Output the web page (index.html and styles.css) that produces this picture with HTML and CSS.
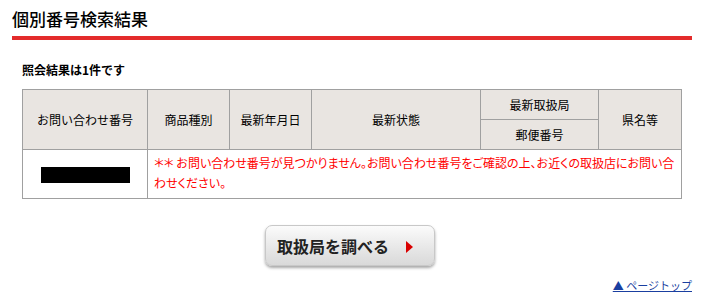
FILE: index.html
```html
<!DOCTYPE html>
<html>
<head>
  <meta charset="utf-8">
  <title>個別番号検索結果</title>
  <link rel="stylesheet" href="styles.css">
</head>
<body>
  <h1 class="titulo">個別番号検索結果</h1>

  <p class="resumo">照会結果は1件です</p>

  <table class="resultado">
    <tr>
      <th rowspan="2" class="c1">お問い合わせ番号</th>
      <th rowspan="2" class="c2">商品種別</th>
      <th rowspan="2" class="c3">最新年月日</th>
      <th rowspan="2" class="c4">最新状態</th>
      <th class="c5 meia">最新取扱局</th>
      <th rowspan="2" class="c6">県名等</th>
    </tr>
    <tr>
      <th class="meia">郵便番号</th>
    </tr>
    <tr>
      <td class="numero"><span class="tarja"></span></td>
      <td colspan="5" class="erro">＊＊ お問い合わせ番号が見つかりません。お問い合わせ番号をご確認の上、お近くの取扱店にお問い合わせください。</td>
    </tr>
  </table>

  <div class="meio_center">
    <button class="botao">取扱局を調べる<span class="seta"></span></button>
  </div>

  <div class="topo">
    <a href="#">▲ ページトップ</a>
  </div>
</body>
</html>
```

FILE: styles.css
```css
body {
  font-family: "Noto Sans CJK JP", "Liberation Sans", sans-serif;
  font-size: 12px;
  color: #000;
  background-color: #fff;
  margin: 0;
  padding: 0 11px 0 12px;
}

.titulo {
  font-size: 17px;
  font-weight: 500;
  margin: 0;
  padding-top: 7px;
  line-height: 24px;
  border-bottom: 4px solid #e32b2b;
  box-sizing: border-box;
  height: 40px;
}

.resumo {
  font-weight: bold;
  margin: 20px 0 0 10px;
  line-height: 20px;
}

.resultado {
  border-collapse: collapse;
  margin: 9px 0 0 10px;
  width: 660px;
}

.resultado th,
.resultado td {
  border: 1px solid #a0a0a0;
  padding: 0 4px;
}

.resultado th {
  background-color: #e9e5e1;
  font-weight: normal;
  height: 59px;
}

.resultado th.meia {
  height: 29px;
}

.c1 { width: 116px; }
.c2 { width: 73px; }
.c3 { width: 73px; }
.c4 { width: 160px; }
.c5 { width: 109px; }

.numero {
  text-align: center;
  height: 48px;
}

.tarja {
  display: inline-block;
  width: 89px;
  height: 16px;
  background-color: #000;
  vertical-align: middle;
}

.erro {
  color: #f00;
  line-height: 20px;
  vertical-align: top;
  padding: 3px 4px 0 6px !important;
  font-feature-settings: "palt";
}

.meio_center {
  text-align: center;
  margin-top: 26px;
  padding-right: 4px;
}

.botao {
  font-family: "Noto Sans CJK JP", sans-serif;
  font-size: 16px;
  font-weight: bold;
  color: #222;
  width: 170px;
  height: 41px;
  border: 1px solid #c8c8c8;
  border-radius: 7px;
  background: linear-gradient(#fbfbfb, #e6e6e6 60%, #d9d9d9);
  box-shadow: 0 2px 3px rgba(0, 0, 0, 0.35);
  text-align: left;
  padding: 0 0 0 11px;
  position: relative;
}

.seta {
  position: absolute;
  right: 21px;
  top: 15px;
  width: 0;
  height: 0;
  border-top: 6px solid transparent;
  border-bottom: 6px solid transparent;
  border-left: 7px solid #d90000;
}

.topo {
  text-align: right;
  margin-top: 11px;
  font-size: 11px;
}

.topo a {
  color: #1a3fa0;
}
```
